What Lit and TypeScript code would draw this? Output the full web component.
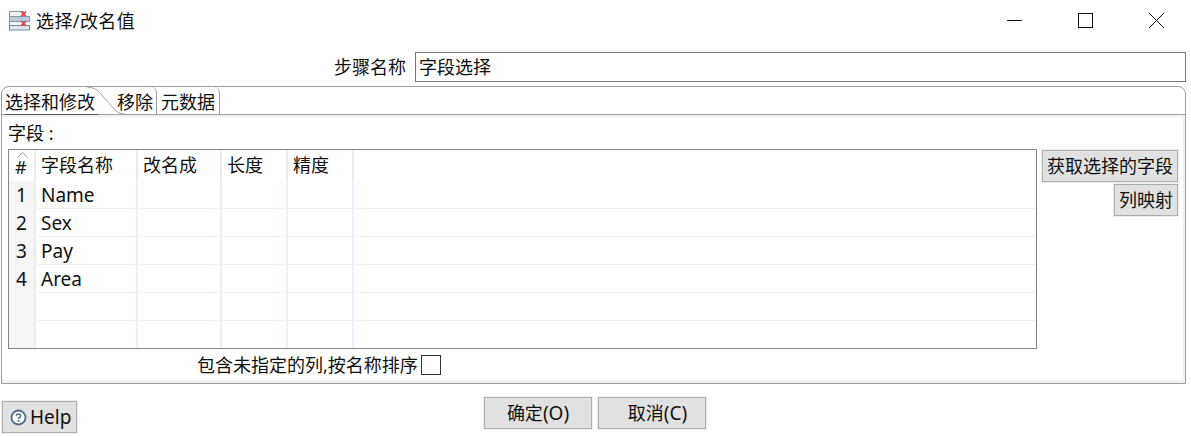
import { LitElement, html, css } from "lit";
import { customElement } from "lit/decorators.js";

const ROWS = ["Name", "Sex", "Pay", "Area", "", ""];
const COLS = ["字段名称", "改名成", "长度", "精度", ""];

@customElement("app-root")
export class AppRoot extends LitElement {
  static styles = css`
    :host { display: block; width: 1191px; height: 436px; overflow: hidden; background: #fff; color: #111;
      font: 18px/24px "Noto Sans", "Noto Sans CJK SC", sans-serif; }
    .title { display: flex; align-items: center; height: 42px; padding-left: 9px; }
    .title .ico { width: 21px; height: 20px; margin-right: 6px; display: block; }
    .title .name { flex: 1; letter-spacing: .4px; }
    .win { display: flex; padding: 0 27px 1px 0; }
    .win svg { display: block; width: 15px; height: 15px; margin-left: 56px; }
    .step { display: flex; align-items: center; justify-content: flex-end; height: 30px; margin: 10px 5px 0 0; gap: 9px; }
    .step .val { box-sizing: border-box; width: 771px; height: 30px; border: 1px solid #7a7a7a; padding: 2px 3px; }
    .folder { position: relative; box-sizing: border-box; width: 1185px; height: 298px; margin: 4px 0 0 1px;
      border: 1px solid #a0a0a0; border-radius: 8px 8px 0 0; display: flex; flex-direction: column; }
    .tabs { display: flex; height: 27px; flex: none; border-bottom: 1px solid #a0a0a0; }
    .tab { box-sizing: border-box; height: 27px; padding-top: 3px; white-space: nowrap; }
    .t1 { width: 93px; margin-left: 3px; height: 28px; border-bottom: 1px solid #555; }
    .t2 { width: 59px; padding-left: 19px; border-right: 1px solid #a0a0a0; border-top-right-radius: 6px; }
    .t3 { width: 63px; padding-left: 4px; border-right: 1px solid #a0a0a0; border-top-right-radius: 6px; }
    .curve { position: absolute; left: 84px; top: 0; width: 44px; height: 29px; display: block; }
    .body { flex: 1; display: flex; flex-direction: column; box-sizing: border-box; padding: 6px 4px 0 6px;
      border: solid #f0f0f0; border-width: 2px 2px 3px 0; }
    .lbl { height: 26px; line-height: 20px; }
    .mid { display: flex; }
    .table { box-sizing: border-box; width: 1029px; height: 200px; border: 1px solid #82868c; flex: none;
      display: grid; grid-template-columns: 27px 102px 84px 66px 66px 1fr; grid-template-rows: 31px repeat(6, 28px); overflow: hidden; }
    .hc { position: relative; box-sizing: border-box; padding: 3px 0 0 5px; border-right: 2px solid #ececec; white-space: nowrap; }
    .hc.num { padding-left: 6px; padding-top: 5px; }
    .sort { position: absolute; left: 8px; top: 2px; width: 11px; height: 6px; display: block; }
    .c { box-sizing: border-box; border-right: 2px solid #eaf1fb; border-bottom: 1px solid #f0f0f0; padding: 2px 0 0 5px; white-space: nowrap; font-size: 19px; }
    .c.num { background: #f5f5f5; border-right-color: #eeeeee; padding-left: 7px; border-bottom-color: #f5f5f5; }
    .c.last, .hc.last { border-right: 0; }
    .side { flex: 1; display: flex; flex-direction: column; align-items: flex-end; gap: 2px; padding: 1px 1px 0 0; }
    button { font: inherit; color: inherit; box-sizing: border-box; margin: 0; background: #e1e1e1; border: 1px solid #adadad;
      outline: 1px solid #f0f0f0; padding: 0; white-space: nowrap; }
    .side button { height: 32px; }
    .b1 { width: 136px; }
    .b2 { width: 64px; }
    .chk { display: flex; align-items: center; height: 30px; padding-left: 189px; gap: 3px; margin-top: 1px; }
    .box { width: 20px; height: 20px; box-sizing: border-box; border: 1px solid #333; background: #fff; }
    .bottom { display: grid; grid-template-columns: 1fr auto 1fr; margin-top: 13px; padding-right: 1px; }
    .btns { display: flex; gap: 6px; }
    .btns button { width: 108px; height: 32px; }
    .btns .cancel { padding-left: 11px; }
    .lat { font-size: 19px; }
    .help { justify-self: start; align-self: start; margin: 4px 0 0 2px; width: 75px; height: 32px; display: flex; align-items: center; padding-left: 7px; gap: 3px; }
    .help svg { width: 17px; height: 17px; display: block; flex: none; }
  `;

  render() {
    return html`
      <div class="title">
        <svg class="ico" viewBox="0 0 21 20">
          <rect x=".5" y=".5" width="14" height="5" fill="#eef3f7" stroke="#7f9bb2"/>
          <rect x=".5" y="5.5" width="20" height="5" fill="#b9cbda" stroke="#7f9bb2"/>
          <rect x=".5" y="10.5" width="14" height="4" fill="#eef3f7" stroke="#7f9bb2"/>
          <rect x=".5" y="14.5" width="20" height="4.5" fill="#dfe8ef" stroke="#6f8ca4"/>
          <path d="M12 .5l5 5M17 .5l-5 5M12 10l5 5M17 10l-5 5" stroke="#e0404a" stroke-width="1.7" fill="none"/>
        </svg>
        <span class="name">选择/改名值</span>
        <div class="win">
          <svg viewBox="0 0 15 15"><path d="M0 7.5h15" stroke="#111" fill="none"/></svg>
          <svg viewBox="0 0 15 15"><rect x=".5" y=".5" width="14" height="14" stroke="#111" fill="none"/></svg>
          <svg viewBox="0 0 15 15"><path d="M0 0l15 15M15 0L0 15" stroke="#111" fill="none"/></svg>
        </div>
      </div>
      <div class="step"><span>步骤名称</span><div class="val">字段选择</div></div>
      <div class="folder">
        <div class="tabs">
          <div class="tab t1">选择和修改</div>
          <div class="tab t2">移除</div>
          <div class="tab t3">元数据</div>
        </div>
        <svg class="curve" viewBox="0 0 44 29">
          <path d="M1 0C6 .5 9 1.5 12 4C16 8 22 15 28 22C31 25 34 27 39 27" fill="none" stroke="#a0a0a0" stroke-width="1"/>
        </svg>
        <div class="body">
          <div class="lbl">字段 :</div>
          <div class="mid">
            <div class="table">
              <div class="hc num">#<svg class="sort" viewBox="0 0 11 6"><path d="M.5 5.5L5.5.5l5 5" fill="none" stroke="#9a9a9a"/></svg></div>
              ${COLS.map((c, i) => html`<div class="hc ${i === 4 ? "last" : ""}">${c}</div>`)}
              ${ROWS.map((r, i) => html`
                <div class="c num">${r ? i + 1 : ""}</div>
                <div class="c">${r}</div>
                <div class="c"></div><div class="c"></div><div class="c"></div><div class="c last"></div>
              `)}
            </div>
            <div class="side">
              <button class="b1">获取选择的字段</button>
              <button class="b2">列映射</button>
            </div>
          </div>
          <div class="chk"><span>包含未指定的列,按名称排序</span><div class="box"></div></div>
        </div>
      </div>
      <div class="bottom">
        <button class="help">
          <svg viewBox="0 0 17 17"><circle cx="8.5" cy="8.5" r="7" fill="#fff" stroke="#4a6f8f" stroke-width="1.8"/>
            <path d="M6.3 6.8C6.4 4.4 10.7 4.4 10.7 6.8C10.7 8.4 8.5 8.3 8.5 10" fill="none" stroke="#4a6f8f" stroke-width="1.5"/>
            <circle cx="8.5" cy="12" r="1" fill="#4a6f8f"/></svg>
          <span class="lat">Help</span>
        </button>
        <div class="btns"><button>确定<span class="lat">(O)</span></button><button class="cancel">取消<span class="lat">(C)</span></button></div>
        <div></div>
      </div>
    `;
  }
}
